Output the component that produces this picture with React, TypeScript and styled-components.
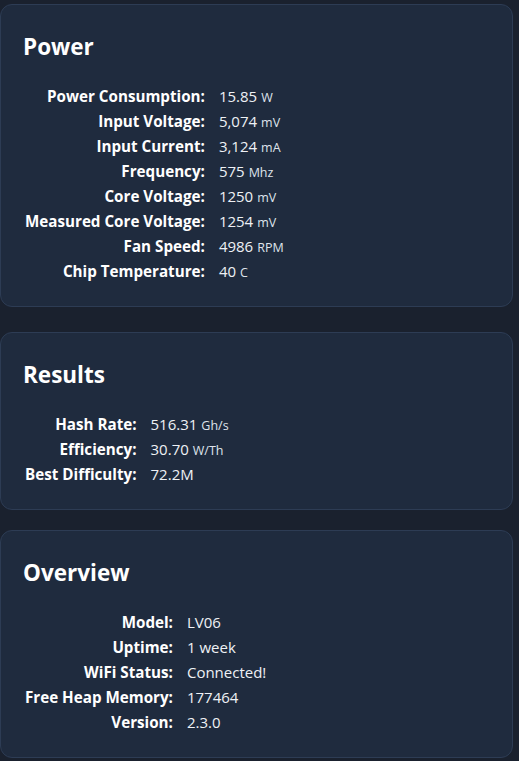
import styled, { createGlobalStyle } from "styled-components";

type Row = { label: string; value: string; unit?: string };

const power: Row[] = [
  { label: "Power Consumption:", value: "15.85", unit: "W" },
  { label: "Input Voltage:", value: "5,074", unit: "mV" },
  { label: "Input Current:", value: "3,124", unit: "mA" },
  { label: "Frequency:", value: "575", unit: "Mhz" },
  { label: "Core Voltage:", value: "1250", unit: "mV" },
  { label: "Measured Core Voltage:", value: "1254", unit: "mV" },
  { label: "Fan Speed:", value: "4986", unit: "RPM" },
  { label: "Chip Temperature:", value: "40", unit: "C" },
];

const results: Row[] = [
  { label: "Hash Rate:", value: "516.31", unit: "Gh/s" },
  { label: "Efficiency:", value: "30.70", unit: "W/Th" },
  { label: "Best Difficulty:", value: "72.2M" },
];

const overview: Row[] = [
  { label: "Model:", value: "LV06" },
  { label: "Uptime:", value: "1 week" },
  { label: "WiFi Status:", value: "Connected!" },
  { label: "Free Heap Memory:", value: "177464" },
  { label: "Version:", value: "2.3.0" },
];

const StatCard = ({
  title,
  rows,
  gapAfter,
}: {
  title: string;
  rows: Row[];
  gapAfter: number;
}) => (
  <Card $gapAfter={gapAfter}>
    <Title>{title}</Title>
    <StatGrid>
      {rows.map((row) => (
        <StatRow key={row.label}>
          <Label>{row.label}</Label>
          <Value>
            {row.value}
            {row.unit && <Unit>{row.unit}</Unit>}
          </Value>
        </StatRow>
      ))}
    </StatGrid>
  </Card>
);

const App = () => {
  return (
    <>
      <GlobalStyle />
      <Page>
        <StatCard title="Power" rows={power} gapAfter={25} />
        <StatCard title="Results" rows={results} gapAfter={20} />
        <StatCard title="Overview" rows={overview} gapAfter={0} />
      </Page>
    </>
  );
};

export default App;

const GlobalStyle = createGlobalStyle`
  html, body {
    margin: 0;
    background: #1a212e;
    font-family: "Open Sans", "Noto Sans", sans-serif;
    color: #ffffff;
  }
`;

const Page = styled.div`
  padding: 4px 6px 0 0;
  display: flex;
  flex-direction: column;
`;

const Card = styled.section<{ $gapAfter: number }>`
  background: #1f2b3e;
  border: 1px solid #2d3c54;
  border-radius: 12px;
  padding: 19px 22px 22.5px 22px;
  margin-bottom: ${(p) => p.$gapAfter}px;
`;

const Title = styled.h2`
  margin: 0;
  font-size: 22.5px;
  font-weight: 700;
  line-height: 46px;
  color: #ffffff;
`;

const StatGrid = styled.div`
  margin: 13.5px 0 0 2px;
  display: grid;
  grid-template-columns: max-content 1fr;
  grid-auto-rows: 25px;
  column-gap: 14px;
`;

const StatRow = styled.div`
  display: contents;
`;

const Label = styled.span`
  text-align: right;
  font-size: 15.2px;
  font-weight: 700;
  line-height: 25px;
  height: 25px;
  white-space: nowrap;
  color: #ffffff;
`;

const Value = styled.span`
  font-size: 15px;
  line-height: 25px;
  height: 25px;
  white-space: nowrap;
  color: #eef1f5;
`;

const Unit = styled.span`
  margin-left: 4px;
  font-size: 12.5px;
  line-height: 1;
  color: #dfe4ec;
`;
